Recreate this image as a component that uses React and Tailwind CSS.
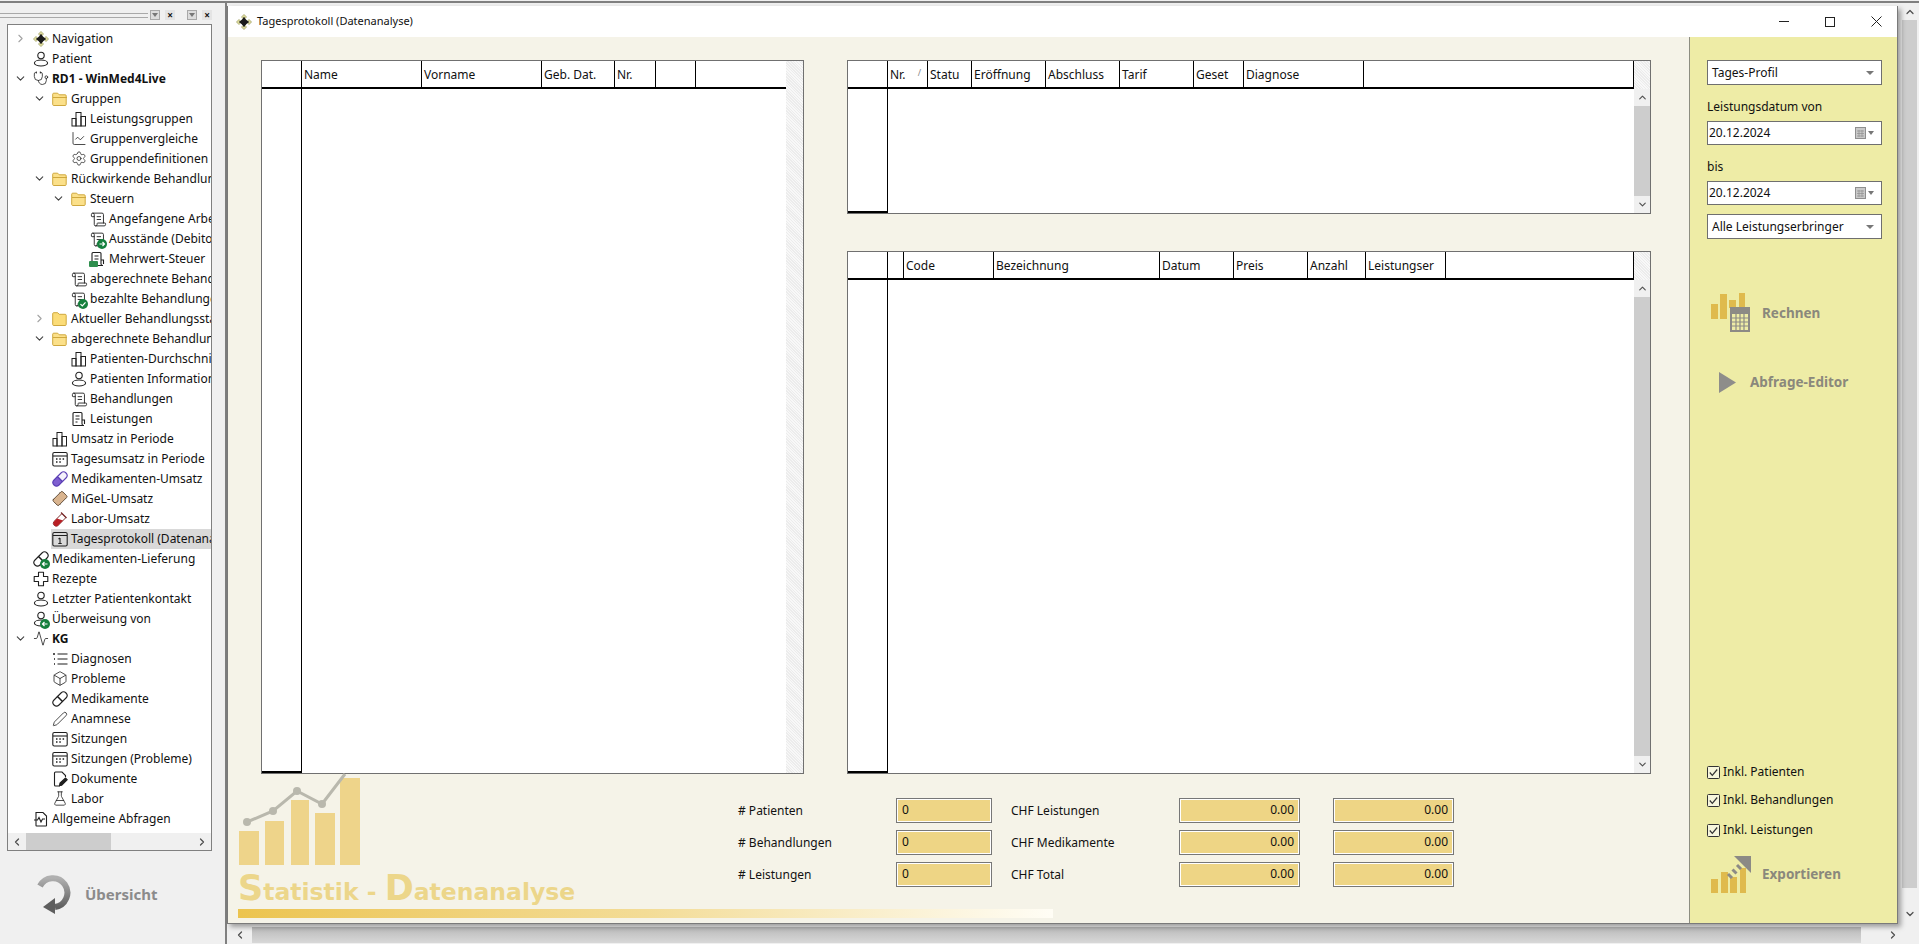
import React from 'react';
import {
  Stethoscope, ChartLine, Settings, ScrollText, Bandage, Activity,
  Box, Pen, FlaskConical, ChevronRight, ChevronDown, ChevronUp, ChevronLeft,
} from 'lucide-react';

const INK = '#1f1f1f';

const User = () => (
  <svg width="16" height="16" viewBox="0 0 16 16" fill="none" stroke={INK} strokeWidth="1.1">
    <circle cx="8" cy="4.5" r="3.2" />
    <ellipse cx="8" cy="12" rx="6.6" ry="3" />
  </svg>
);

const NavIcon = () => (
  <svg width="16" height="16" viewBox="0 0 16 16">
    <g fill="#eceaa8" stroke="#7d7d3a" strokeWidth=".6">
      <path d="M8 .5 10.500 3 8 5.500 5.500 3Z" />
      <path d="M8 10.500 10.500 13 8 15.500 5.500 13Z" />
      <path d="M3 5.500 5.500 8 3 10.500 .5 8Z" />
      <path d="M13 5.500 15.500 8 13 10.500 10.500 8Z" />
    </g>
    <path d="M8 2.500 10 6l3.500 2L10 10l-2 3.500L6 10 2.500 8 6 6Z" fill="#1b1b1b" />
    <circle cx="8" cy="8" r="3.100" fill="#1b1b1b" />
  </svg>
);

const FolderOpen = () => (
  <svg width="16" height="16" viewBox="0 0 16 16">
    <path d="M.7 13.500V3.200c0-.6.4-1 1-1h4l1.500 1.600h6c.6 0 1 .4 1 1v8.700c0 .6-.4 1-1 1H1.700c-.6 0-1-.4-1-1Z" fill="#fbe08a" stroke="#cfa83e" />
    <path d="M1 6.500h14" stroke="#cfa83e" />
  </svg>
);

const FolderClosed = () => (
  <svg width="16" height="16" viewBox="0 0 16 16">
    <path d="M.7 13.500V2.700c0-.6.4-1 1-1h4l1.500 1.600h6c.6 0 1 .4 1 1v9.200c0 .6-.4 1-1 1H1.700c-.6 0-1-.4-1-1Z" fill="#fbdc78" stroke="#cfa83e" />
  </svg>
);

const Bars = () => (
  <svg width="16" height="16" viewBox="0 0 16 16" fill="none" stroke={INK} strokeWidth="1">
    <rect x="1" y="7.500" width="4" height="7.500" />
    <rect x="5" y="1.500" width="5" height="13.500" />
    <rect x="10" y="5.500" width="4.500" height="9.500" />
  </svg>
);

const Badge = ({ kind = 'arrow' }) => (
  <svg className="absolute -bottom-[2px] -right-[1px]" width="10" height="10" viewBox="0 0 10 10">
    <circle cx="5" cy="5" r="5" fill="#15803d" />
    {kind === 'arrow' && <path d="M2.500 5h5M5.500 3l2 2-2 2" stroke="#fff" strokeWidth="1.2" fill="none" />}
    {kind === 'back' && <path d="M7.500 5h-5M4.500 3l-2 2 2 2" stroke="#fff" strokeWidth="1.2" fill="none" />}
    {kind === 'check' && <path d="M2.500 5.200 4.300 7l3.200-3.600" stroke="#fff" strokeWidth="1.2" fill="none" />}
  </svg>
);

const Scroll = ({ badge }) => (
  <span className="relative block h-4 w-4">
    <ScrollText size={17} strokeWidth={1.25} color={INK} />
    {badge && <Badge kind={badge} />}
  </span>
);

const Receipt = ({ money }) => (
  <span className="relative block h-4 w-4">
    <svg width="16" height="16" viewBox="0 0 16 16" fill="none" stroke={INK} strokeWidth="1.1">
      <path d="M2 14V2.500c0-.6.4-1 1-1h7c.6 0 1 .4 1 1V13c0 1 1 1.500 2 1.500H3c-.6 0-1-.2-1-.5Z" />
      <path d="M4.500 5h4M4.500 8h4M4.500 11h2M11 9h2.500v4" />
    </svg>
    {money && <span className="absolute -left-[1px] bottom-0 h-[6px] w-[9px] rounded-[1px] bg-[#2f8f4e]" />}
  </span>
);

const Calendar = () => (
  <svg width="16" height="16" viewBox="0 0 16 16" fill="none" stroke={INK} strokeWidth="1.1">
    <rect x=".8" y="1.500" width="14.400" height="13.500" rx="1.500" />
    <path d="M1 5h14" />
    <path d="M4 8h1.500M7.300 8h1.500M10.600 8h1.500M4 11h1.500M7.300 11h1.500" strokeWidth="1.500" />
  </svg>
);

const CalendarOne = () => (
  <svg width="16" height="16" viewBox="0 0 16 16" fill="none" stroke={INK} strokeWidth="1.1">
    <rect x=".8" y="1.500" width="14.400" height="13.500" rx="1.500" />
    <path d="M1 4.500h14M8 7l-1.500 1M8 7v5.500M6.300 12.500h3.400" />
  </svg>
);

const Diagnosis = () => (
  <svg width="16" height="16" viewBox="0 0 16 16" fill="none" stroke={INK} strokeWidth="1.1">
    <path d="M5.500 3h10M5.500 8h10M5.500 13h10" />
    <path d="M1 3h2M2 8h1M2 13h1" strokeWidth="1.400" />
  </svg>
);

const Cross = () => (
  <svg width="16" height="16" viewBox="0 0 16 16" fill="none" stroke={INK} strokeWidth="1.1">
    <path d="M5.500 1.200h5v4.300h4.300v5h-4.300v4.300h-5v-4.300H1.200v-5h4.300Z" strokeLinejoin="round" />
  </svg>
);

const DocPen = () => (
  <svg width="16" height="16" viewBox="0 0 16 16" fill="none" stroke={INK} strokeWidth="1.1">
    <path d="M8 15H3.500c-.6 0-1-.4-1-1V2c0-.6.4-1 1-1h6.500l3.500 3.500V6" />
    <path d="M7.500 14.500 8 12l5.500-5 1.700 1.700-5.500 5.500Z" fill={INK} />
  </svg>
);

const DocPulse = () => (
  <svg width="16" height="16" viewBox="0 0 16 16" fill="none" stroke={INK} strokeWidth="1.1">
    <path d="M3 14.500V1.500h7l3.500 3.500v9.500c0 .4-.2.5-.5.5H3.500c-.3 0-.5-.1-.5-.5Z" />
    <path d="M1 9h3.500l1.500-2.500L8 11l1.500-3h2.500" />
  </svg>
);

// capsule lying from lower left to upper right
const Capsule = ({ stroke = INK, low = 'none', high = 'none' }) => (
  <svg width="16" height="16" viewBox="0 0 16 16" strokeWidth="1.1" stroke={stroke}>
    <path d="M5.500 5.500 2 9a3.500 3.500 0 0 0 5 5l3.500-3.500Z" fill={low} />
    <path d="M5.500 5.500 9 2a3.500 3.500 0 0 1 5 5l-3.500 3.500Z" fill={high} />
  </svg>
);

const Plaster = () => <Bandage size={17} strokeWidth={1.3} color="#5a4632" fill="#d9b48f" className="-rotate-45" />;

const Tube = () => (
  <svg width="16" height="16" viewBox="0 0 16 16">
    <path d="M10 2.500 1.800 10.700a2.900 2.900 0 0 0 4 4L14 6.500Z" fill="#fff" stroke="#7d3030" strokeWidth="1" />
    <path d="M5 7.500 1.800 10.700a2.900 2.900 0 0 0 4 4L11 9.500Z" fill="#b81f24" />
    <path d="M9 1.500l5.500 5.500" stroke="#7d3030" strokeWidth="1.300" />
  </svg>
);

const Delivery = () => (
  <span className="relative block h-4 w-4">
    <Capsule />
    <Badge kind="back" />
  </span>
);

const Referral = () => (
  <span className="relative block h-4 w-4">
    <User />
    <Badge kind="back" />
  </span>
);

const rows = [
  { l: 0, t: 'Navigation', c: 'r', i: <NavIcon /> },
  { l: 0, t: 'Patient', i: <User /> },
  { l: 0, t: 'RD1 - WinMed4Live', c: 'd', b: true, i: <Stethoscope size={17} strokeWidth={1.2} color={INK} /> },
  { l: 1, t: 'Gruppen', c: 'd', i: <FolderOpen /> },
  { l: 2, t: 'Leistungsgruppen', i: <Bars /> },
  { l: 2, t: 'Gruppenvergleiche', i: <ChartLine size={17} strokeWidth={1.2} color={INK} /> },
  { l: 2, t: 'Gruppendefinitionen', i: <Settings size={17} strokeWidth={1.1} color={INK} /> },
  { l: 1, t: 'Rückwirkende Behandlungen', c: 'd', i: <FolderOpen /> },
  { l: 2, t: 'Steuern', c: 'd', i: <FolderOpen /> },
  { l: 3, t: 'Angefangene Arbeiten', i: <Scroll /> },
  { l: 3, t: 'Ausstände (Debitoren)', i: <Scroll badge="arrow" /> },
  { l: 3, t: 'Mehrwert-Steuer', i: <Receipt money /> },
  { l: 2, t: 'abgerechnete Behandlungen', i: <Scroll /> },
  { l: 2, t: 'bezahlte Behandlungen', i: <Scroll badge="check" /> },
  { l: 1, t: 'Aktueller Behandlungsstand', c: 'r', i: <FolderClosed /> },
  { l: 1, t: 'abgerechnete Behandlungen', c: 'd', i: <FolderOpen /> },
  { l: 2, t: 'Patienten-Durchschnitt', i: <Bars /> },
  { l: 2, t: 'Patienten Informationen', i: <User /> },
  { l: 2, t: 'Behandlungen', i: <Scroll /> },
  { l: 2, t: 'Leistungen', i: <Receipt /> },
  { l: 1, t: 'Umsatz in Periode', i: <Bars /> },
  { l: 1, t: 'Tagesumsatz in Periode', i: <Calendar /> },
  { l: 1, t: 'Medikamenten-Umsatz', i: <Capsule stroke="#5b3fb5" low="#7f5fd0" high="#f4f1fb" /> },
  { l: 1, t: 'MiGeL-Umsatz', i: <Plaster /> },
  { l: 1, t: 'Labor-Umsatz', i: <Tube /> },
  { l: 1, t: 'Tagesprotokoll (Datenanalyse)', sel: true, i: <CalendarOne /> },
  { l: 0, t: 'Medikamenten-Lieferung', i: <Delivery /> },
  { l: 0, t: 'Rezepte', i: <Cross /> },
  { l: 0, t: 'Letzter Patientenkontakt', i: <User /> },
  { l: 0, t: 'Überweisung von', i: <Referral /> },
  { l: 0, t: 'KG', c: 'd', b: true, i: <Activity size={17} strokeWidth={1.2} color={INK} /> },
  { l: 1, t: 'Diagnosen', i: <Diagnosis /> },
  { l: 1, t: 'Probleme', i: <Box size={17} strokeWidth={1.2} color={INK} /> },
  { l: 1, t: 'Medikamente', i: <Capsule /> },
  { l: 1, t: 'Anamnese', i: <Pen size={16} strokeWidth={1.2} color={INK} /> },
  { l: 1, t: 'Sitzungen', i: <Calendar /> },
  { l: 1, t: 'Sitzungen (Probleme)', i: <Calendar /> },
  { l: 1, t: 'Dokumente', i: <DocPen /> },
  { l: 1, t: 'Labor', i: <FlaskConical size={17} strokeWidth={1.2} color={INK} /> },
  { l: 0, t: 'Allgemeine Abfragen', i: <DocPulse /> },
];

const indent = ['pl-[7px]', 'pl-[26px]', 'pl-[45px]', 'pl-[64px]'];

const TreeRow = ({ row }) => (
  <div className={`flex h-5 items-center ${indent[row.l]}`}>
    <span className="-ml-[1px] flex w-[18px] shrink-0">
      {row.c === 'r' && <ChevronRight size={13} strokeWidth={2} color="#a3a3a3" />}
      {row.c === 'd' && <ChevronDown size={13} strokeWidth={2} color="#404040" />}
    </span>
    <div className={`flex h-5 flex-1 items-center pl-[1px] ${row.sel ? 'bg-[#d9d9d9]' : ''}`}>
      <span className="mr-[3px] flex w-4 shrink-0 justify-center">{row.i}</span>
      <span className={`whitespace-nowrap text-[12px] ${row.b ? 'font-bold' : ''}`}>{row.t}</span>
    </div>
  </div>
);

const GripButtons = () => (
  <>
    <span className="flex h-[10px] w-[10px] items-center justify-center border border-[#a8a8a8] bg-[#dcdcdc]">
      <span className="h-0 w-0 border-x-[3px] border-t-[4px] border-x-transparent border-t-[#777]" />
    </span>
    <span className="flex h-[10px] w-[10px] items-center justify-center bg-[#e4e4e4] text-[10px] font-bold leading-none">×</span>
  </>
);

const Sidebar = () => (
  <div className="flex w-[225px] shrink-0 flex-col">
    <div className="flex h-[21px] items-center pr-[13px] pt-[3px]">
      <div className="h-[5px] w-[148px] border-y border-[#a9a9a9]" />
      <div className="ml-[2px] flex gap-[5px]"><GripButtons /></div>
      <div className="ml-auto flex gap-[5px]"><GripButtons /></div>
    </div>
    <div className="ml-[7px] flex h-[827px] w-[205px] flex-col border border-[#808080] bg-white">
      <div className="h-[808px] overflow-hidden pt-[3.5px]">
        {rows.map((r) => <TreeRow key={r.t + r.l} row={r} />)}
      </div>
      <div className="mt-auto flex h-[17px] items-center bg-[#f0f0f0]">
        <span className="flex w-[18px] justify-center"><ChevronLeft size={12} strokeWidth={2.5} color="#505050" /></span>
        <span className="h-[17px] w-[85px] bg-[#cdcdcd]" />
        <span className="ml-auto flex w-[18px] justify-center"><ChevronRight size={12} strokeWidth={2.5} color="#505050" /></span>
      </div>
    </div>
    <div className="ml-[36px] mt-[23px] flex items-center gap-[14px]">
      <svg width="35" height="41" viewBox="0 0 35 41">
        <defs>
          <linearGradient id="ov" x1="0" y1="0" x2="0" y2="1">
            <stop offset="0" stopColor="#b0b0b0" />
            <stop offset="1" stopColor="#606060" />
          </linearGradient>
        </defs>
        <path d="M4 12A14.500 14.500 0 1 1 19 33" fill="none" stroke="url(#ov)" strokeWidth="6" />
        <path d="M7 33 19 24v16Z" fill="#5e5e5e" />
      </svg>
      <span className="text-[15px] font-bold text-[#8b8b8b]">Übersicht</span>
    </div>
  </div>
);

const HeaderCell = ({ w, children }) => (
  <div className="flex shrink-0 items-center overflow-hidden whitespace-nowrap border-r border-black pl-[2px] pt-[2px] text-[12px]" style={{ width: w }}>
    {children}
  </div>
);

const dither = 'bg-[repeating-linear-gradient(45deg,#ececec_0px,#ececec_1px,#f8f8f8_1px,#f8f8f8_2px)]';

const VBar = () => (
  <div className="flex w-[16px] shrink-0 flex-col bg-[#f0f0f0]">
    <div className={`h-[28px] shrink-0 ${dither}`} />
    <div className="flex h-[17px] shrink-0 items-center justify-center"><ChevronUp size={11} strokeWidth={2.5} color="#505050" /></div>
    <div className="flex-1 bg-[#cdcdcd]" />
    <div className="flex h-[17px] shrink-0 items-center justify-center"><ChevronDown size={11} strokeWidth={2.5} color="#505050" /></div>
  </div>
);

const GridTable = ({ cols, heightClass, plain }) => (
  <div className={`flex border border-[#707070] bg-white ${heightClass}`}>
    <div className="flex min-w-0 flex-1 flex-col">
      <div className="flex h-[28px] shrink-0 border-b-2 border-black">
        {cols.map((c, i) => <HeaderCell key={i} w={c.w}>{c.t}</HeaderCell>)}
      </div>
      <div className="flex-1">
        <div className="h-full w-[40px] border-b-2 border-r border-black" />
      </div>
    </div>
    {plain ? <div className={`w-[17px] shrink-0 ${dither}`} /> : <VBar />}
  </div>
);

const patientCols = [
  { w: 40 }, { w: 120, t: 'Name' }, { w: 120, t: 'Vorname' }, { w: 73, t: 'Geb. Dat.' },
  { w: 41, t: 'Nr.' }, { w: 40 }, { w: 91 },
];

const caseCols = [
  { w: 40 },
  { w: 40, t: <span className="flex w-full justify-between pr-[6px]">Nr.<span className="text-[9px] text-[#888]">/</span></span> },
  { w: 44, t: 'Statu' }, { w: 74, t: 'Eröffnung' }, { w: 74, t: 'Abschluss' }, { w: 74, t: 'Tarif' },
  { w: 50, t: 'Geset' }, { w: 120, t: 'Diagnose' }, { w: 270 },
];

const serviceCols = [
  { w: 40 }, { w: 16 }, { w: 90, t: 'Code' }, { w: 166, t: 'Bezeichnung' }, { w: 74, t: 'Datum' },
  { w: 74, t: 'Preis' }, { w: 58, t: 'Anzahl' }, { w: 80, t: 'Leistungser' }, { w: 188 },
];

const Field = ({ children, right }) => (
  <div className={`flex h-[25px] items-start border border-[#777] bg-[#eed585] px-[5px] pt-[3px] text-[12px] leading-[15px] shadow-[inset_0_0_0_1px_#fff] ${right ? 'justify-end' : ''}`}>
    {children}
  </div>
);

const Stats = () => (
  <div className="mt-[24px] grid grid-cols-[158px_96px_187px_121px_154px] items-center gap-y-[7px] self-start text-[12px]">
    <span>{'# Patienten'}</span>
    <Field>0</Field>
    <span className="pl-[19px]">CHF Leistungen</span>
    <Field right>0.00</Field>
    <div className="pl-[33px]"><Field right>0.00</Field></div>
    <span>{'# Behandlungen'}</span>
    <Field>0</Field>
    <span className="pl-[19px]">CHF Medikamente</span>
    <Field right>0.00</Field>
    <div className="pl-[33px]"><Field right>0.00</Field></div>
    <span>{'# Leistungen'}</span>
    <Field>0</Field>
    <span className="pl-[19px]">CHF Total</span>
    <Field right>0.00</Field>
    <div className="pl-[33px]"><Field right>0.00</Field></div>
  </div>
);

const Logo = () => (
  <div className="flex w-[510px] shrink-0 flex-col pl-[10px]">
    <svg width="125" height="101" viewBox="0 0 125 101" className="shrink-0 overflow-visible">
      <g fill="#eed48a">
        <rect x="1" y="57" width="20" height="34" />
        <rect x="27" y="47" width="19" height="44" />
        <rect x="53" y="26" width="18" height="65" />
        <rect x="77" y="39" width="20" height="52" />
        <rect x="102" y="4" width="20" height="87" />
      </g>
      <path d="M9 48 35 37 59 17 84 30 107 0" fill="none" stroke="#b9b8ad" strokeWidth="3" />
      <g fill="#b9b8ad">
        <circle cx="9" cy="48" r="4" />
        <circle cx="35" cy="37" r="4" />
        <circle cx="59" cy="17" r="4" />
        <circle cx="84" cy="30" r="4" />
      </g>
    </svg>
    <div className="-mt-[4px] whitespace-nowrap font-['DejaVu_Sans'] text-[23.5px] font-bold leading-[34px] text-[#ecd68a]">
      <span className="text-[35px]">S</span>tatistik - <span className="text-[35px]">D</span>atenanalyse
    </div>
  </div>
);

const Select = ({ children }) => (
  <div className="flex h-[25px] items-center justify-between border border-[#6f6f6f] bg-white pl-[4px] pr-[7px] text-[12px]">
    {children}
    <span className="h-0 w-0 border-x-[4px] border-t-[4px] border-x-transparent border-t-[#777]" />
  </div>
);

const DateField = ({ children }) => (
  <div className="flex h-[24px] items-center justify-between border border-[#6f6f6f] bg-white pl-[1px] pr-[7px] text-[12px]">
    {children}
    <span className="flex items-center gap-[2px]">
      <svg width="11" height="12" viewBox="0 0 11 12">
        <rect x=".5" y=".5" width="10" height="11" fill="#c9c9c9" stroke="#8f8f8f" />
        <path d="M2 4h7M2 6.500h7M2 9h7M4 3v7M7 3v7" stroke="#8f8f8f" strokeWidth=".7" />
      </svg>
      <span className="h-0 w-0 border-x-[3.5px] border-t-[4px] border-x-transparent border-t-[#777]" />
    </span>
  </div>
);

const CalcIcon = () => (
  <svg width="40" height="40" viewBox="0 0 40 40">
    <g fill="#dfba4d">
      <rect x="0" y="11" width="7" height="15" />
      <rect x="9" y="1" width="7" height="25" />
      <rect x="18" y="7" width="7" height="8" />
      <rect x="28" y="0" width="6" height="14" />
    </g>
    <rect x="19" y="14" width="20" height="25" fill="#8c8a85" />
    <rect x="21" y="21" width="16" height="16" fill="#eeeca6" />
    <path d="M21 25h16M21 29h16M21 33h16M25 21v16M29 21v16M33 21v16" stroke="#8c8a85" strokeWidth="1.2" />
  </svg>
);

const ExportIcon = () => (
  <svg width="41" height="39" viewBox="0 0 41 39">
    <g fill="#dfba4d">
      <rect x="0" y="24" width="7" height="14" />
      <rect x="10" y="17" width="7" height="21" />
      <rect x="19" y="22" width="7" height="16" />
      <rect x="29" y="13" width="6" height="25" />
    </g>
    <path d="M23 1h17v17Z" fill="#8c8a85" />
    <path d="M17 19l4 4M21.500 14.500l4 4M26 10l4 4" stroke="#8c8a85" strokeWidth="3" />
  </svg>
);

const Check = ({ children, className }) => (
  <div className={`flex items-center gap-[3px] text-[12px] leading-[16px] ${className}`}>
    <svg width="13" height="13" viewBox="0 0 13 13">
      <rect x=".5" y=".5" width="12" height="12" rx="1" fill="#f7f6dc" stroke="#333" />
      <path d="M2.800 6.500 5.300 9.300 10.200 3.500" fill="none" stroke="#333" strokeWidth="1.2" />
    </svg>
    {children}
  </div>
);

const RightPanel = () => (
  <div className="flex w-[208px] shrink-0 flex-col border-l border-[#8d8d80] bg-[#eeeca6] pl-[17px] pr-[15px] pt-[23px]">
    <Select>Tages-Profil</Select>
    <div className="mt-[13px] text-[12px] leading-[18px]">Leistungsdatum von</div>
    <div className="mt-[5px]"><DateField>20.12.2024</DateField></div>
    <div className="mt-[13px] text-[12px] leading-[18px]">bis</div>
    <div className="mt-[5px]"><DateField>20.12.2024</DateField></div>
    <div className="mt-[9px]"><Select>Alle Leistungserbringer</Select></div>
    <div className="ml-[4px] mt-[54px] flex items-center gap-[11px]">
      <CalcIcon />
      <span className="text-[13.5px] font-bold text-[#8a887c]">Rechnen</span>
    </div>
    <div className="ml-[12px] mt-[39px] flex items-center gap-[14px]">
      <svg width="17" height="21" viewBox="0 0 17 21"><path d="M0 0 17 10.500 0 21Z" fill="#8e8d8a" /></svg>
      <span className="text-[13.5px] font-bold text-[#8a887c]">Abfrage-Editor</span>
    </div>
    <Check className="mt-[371px]">Inkl. Patienten</Check>
    <Check className="mt-[12px]">Inkl. Behandlungen</Check>
    <Check className="mt-[14px]">Inkl. Leistungen</Check>
    <div className="ml-[4px] mt-[17px] flex items-center gap-[10px]">
      <ExportIcon />
      <span className="text-[13.5px] font-bold text-[#8a887c]">Exportieren</span>
    </div>
  </div>
);

const ChildWindow = () => (
  <div className="relative z-10 flex h-[918px] w-[1671px] flex-col border-x border-b border-[#7a7a7a] bg-white shadow-[3px_3px_5px_rgba(0,0,0,0.35)]">
    <div className="flex h-[31px] shrink-0 items-center pl-[8px]">
      <NavIcon />
      <span className="ml-[5px] text-[11px]">Tagesprotokoll (Datenanalyse)</span>
      <div className="ml-auto flex items-center gap-[36px] pr-[15px]">
        <span className="h-px w-[10px] bg-[#222]" />
        <span className="h-[10px] w-[10px] border border-[#222]" />
        <svg width="11" height="11" viewBox="0 0 11 11"><path d="M.5.5l10 10M10.500.5l-10 10" stroke="#222" /></svg>
      </div>
    </div>
    <div className="flex min-h-0 flex-1">
      <div className="flex min-w-0 flex-1 flex-col bg-[#f5f3e8]">
        <div className="flex pl-[33px] pt-[23px]">
          <div className="w-[543px]">
            <GridTable cols={patientCols} heightClass="h-[714px]" plain />
          </div>
          <div className="ml-[43px] flex w-[804px] flex-col gap-[37px]">
            <GridTable cols={caseCols} heightClass="h-[154px]" />
            <GridTable cols={serviceCols} heightClass="h-[523px]" />
          </div>
        </div>
        <div className="flex h-[135px]">
          <Logo />
          <Stats />
        </div>
        <div className="ml-[10px] h-[9px] w-[815px] bg-gradient-to-r from-[#ecc44e] via-[#f3dc96] to-[#fffdf5]" />
      </div>
      <RightPanel />
    </div>
  </div>
);

const App = () => (
  <div className="flex h-[944px] w-[1919px] flex-col overflow-hidden bg-[#f0f0f0] font-['Noto_Sans',sans-serif] text-[#111]">
    <div className="mt-px h-[2px] shrink-0 bg-[#808080]" />
    <div className="flex min-h-0 flex-1">
      <Sidebar />
      <div className="flex min-w-0 flex-1 flex-col border-l-2 border-[#808080]">
        <div className="flex h-[921px] shrink-0">
          <div className="pt-[3px]"><ChildWindow /></div>
          <div className="ml-[4px] flex w-[15px] flex-col bg-[#f0f0f0]">
            <div className="flex h-[17px] items-center justify-center"><ChevronUp size={12} strokeWidth={2.5} color="#505050" /></div>
            <div className="h-[868px] bg-[#cdcdcd]" />
            <div className="mt-auto flex h-[20px] items-center justify-center"><ChevronDown size={12} strokeWidth={2.5} color="#505050" /></div>
          </div>
        </div>
        <div className="mt-[3px] flex h-[16px] items-center">
          <span className="flex w-[25px] justify-center"><ChevronLeft size={12} strokeWidth={2.5} color="#505050" /></span>
          <span className="h-[16px] w-[1609px] bg-gradient-to-b from-[#b9b9b9] to-[#d8d8d8]" />
          <span className="ml-[26px] flex w-[12px] justify-center"><ChevronRight size={12} strokeWidth={2.5} color="#505050" /></span>
        </div>
      </div>
    </div>
  </div>
);

export default App;
